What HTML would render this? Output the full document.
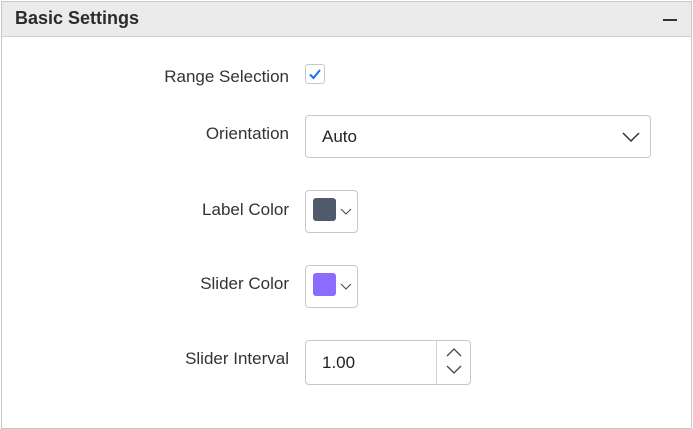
<!DOCTYPE html>
<html><head><style>
body{margin:0;width:693px;height:429px;background:#fff;font-family:"Liberation Sans",sans-serif;position:relative;overflow:hidden}
.frame{position:absolute;left:1px;top:1px;width:689px;height:426px;border:1px solid #c8c8c8}
.hdr{position:absolute;left:0;top:0;width:689px;height:34px;background:#ebebeb;border-bottom:1px solid #cfcfcf}
.hdr span{position:absolute;left:13px;top:6px;font-size:18px;font-weight:bold;color:#2b2b2b}
.min{position:absolute;left:661px;top:17px;width:14px;height:2px;background:#333}
.lbl{position:absolute;right:404px;font-size:17px;color:#333}
.box{position:absolute;border:1px solid #c8c8c8;border-radius:4px;background:#fff}
.sw{position:absolute;left:7px;top:7px;width:23px;height:23px;border-radius:3px}
</style></head><body>
<div class="frame">
<div class="hdr"><span>Basic Settings</span><div class="min"></div></div>
</div>
<div class="lbl" style="top:67px">Range Selection</div>
<div class="box" style="left:305px;top:64px;width:18px;height:18px;border-radius:3px">
<svg width="18" height="18" style="position:absolute;left:0;top:0"><path d="M4 9.5 L7.5 13 L14 5" stroke="#1a6ef5" stroke-width="2" fill="none"/></svg></div>
<div class="lbl" style="top:124px">Orientation</div>
<div class="box" style="left:305px;top:115px;width:344px;height:41px">
<span style="position:absolute;left:16px;top:11px;font-size:17px;color:#222">Auto</span>
<svg width="20" height="12" style="position:absolute;left:315px;top:15px"><path d="M2 2 L10 10 L18 2" stroke="#333" stroke-width="1.5" fill="none"/></svg></div>
<div class="lbl" style="top:200px">Label Color</div>
<div class="box" style="left:305px;top:190px;width:51px;height:41px"><div class="sw" style="background:#4f5b6b"></div>
<svg width="12" height="8" style="position:absolute;left:34px;top:17px"><path d="M1 1 L6 6 L11 1" stroke="#444" stroke-width="1" fill="none"/></svg></div>
<div class="lbl" style="top:274px">Slider Color</div>
<div class="box" style="left:305px;top:265px;width:51px;height:41px"><div class="sw" style="background:#8b6cff"></div>
<svg width="12" height="8" style="position:absolute;left:34px;top:17px"><path d="M1 1 L6 6 L11 1" stroke="#444" stroke-width="1" fill="none"/></svg></div>
<div class="lbl" style="top:349px">Slider Interval</div>
<div class="box" style="left:305px;top:340px;width:164px;height:43px">
<span style="position:absolute;left:16px;top:12px;font-size:17px;color:#222">1.00</span>
<div style="position:absolute;left:130px;top:0;width:1px;height:43px;background:#d0d0d0"></div>
<svg width="20" height="36" style="position:absolute;left:138px;top:4px"><path d="M3 11 L10 4 L17 11 M3 21 L10 28 L17 21" stroke="#444" stroke-width="1.3" fill="none"/></svg></div>
</body></html>
